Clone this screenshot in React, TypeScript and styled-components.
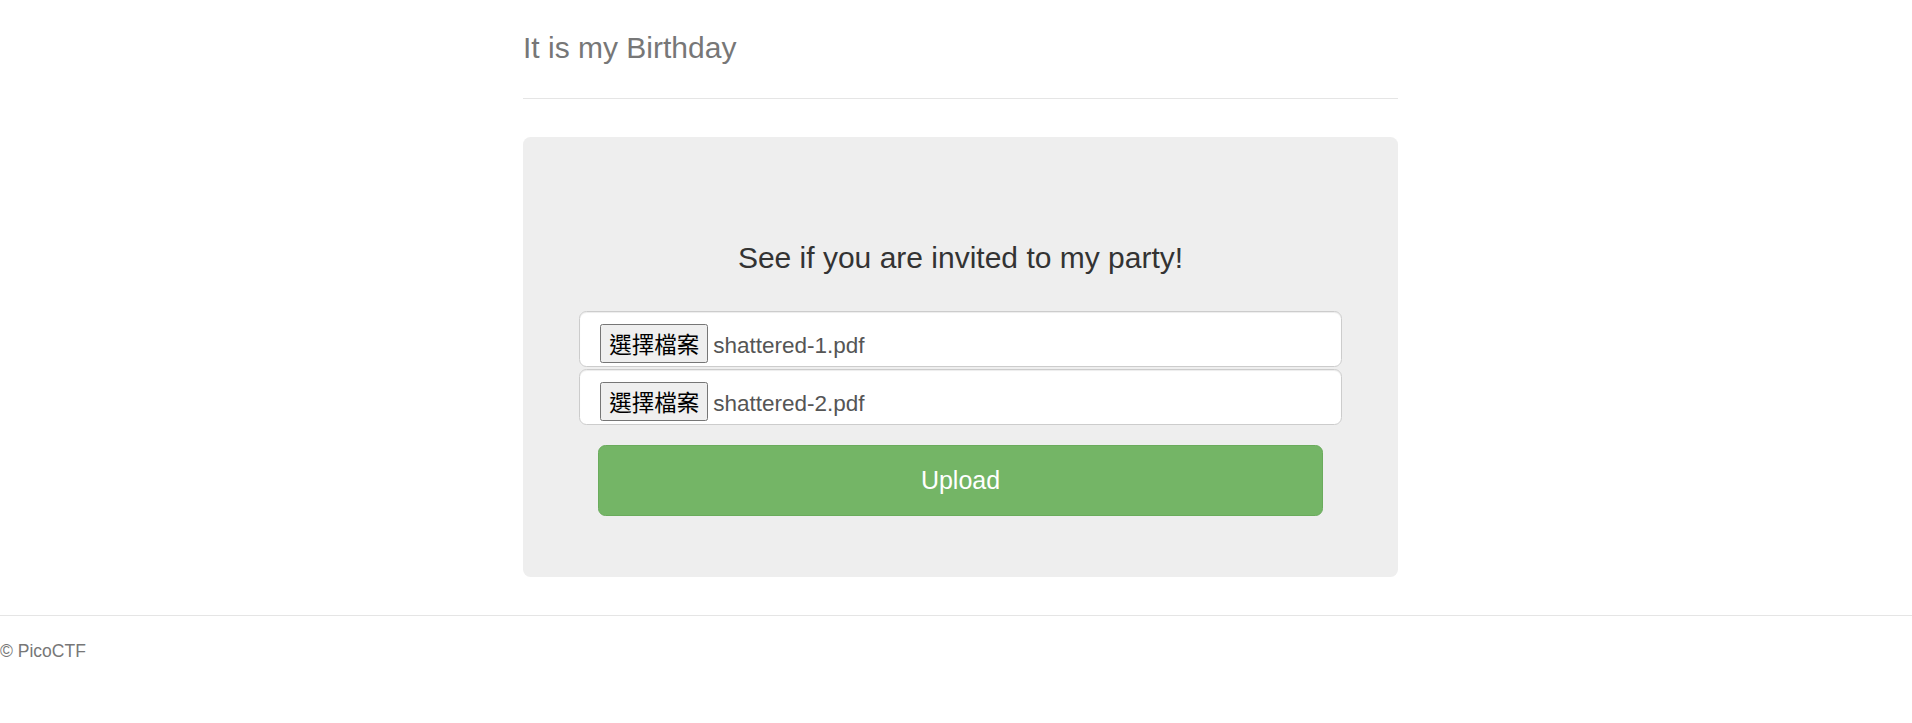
import React from "react";
import styled, { createGlobalStyle } from "styled-components";

const GlobalStyle = createGlobalStyle`
  html, body {
    margin: 0;
    padding: 0;
    background: #ffffff;
  }
  body {
    font-family: "Liberation Sans", Arial, Helvetica, sans-serif;
    color: #333333;
  }
  * {
    box-sizing: border-box;
  }
`;

const Page = styled.div`
  padding-top: 23px;
`;

const Centerer = styled.div`
  padding-left: 9px;
`;

const Container = styled.div`
  width: 875px;
  margin: 0 auto;
`;

const Header = styled.header`
  padding-bottom: 25px;
  border-bottom: 1px solid #e5e5e5;
  margin-bottom: 38px;
`;

const SiteTitle = styled.h3`
  margin: 0;
  font-size: 30px;
  line-height: 50px;
  font-weight: 500;
  color: #777777;
`;

const Jumbotron = styled.div`
  background: #eeeeee;
  border-radius: 7.5px;
  padding: 60px 75px 60.5px;
  margin-bottom: 38.5px;
  text-align: center;
`;

const Lead = styled.h3`
  margin: 44px 0 37px;
  font-size: 30px;
  line-height: 33px;
  font-weight: 500;
  color: #333333;
`;

const FileGroup = styled.div`
  display: flex;
  flex-direction: column;
  gap: 2px;
  margin: 0 -18.75px;
`;

const FileField = styled.div`
  height: 56px;
  display: flex;
  align-items: baseline;
  gap: 5px;
  padding: 12px 20px 0;
  background: #ffffff;
  border: 1px solid #cccccc;
  border-radius: 7.5px;
  box-shadow: inset 0 1px 1px rgba(0, 0, 0, 0.075);
  text-align: left;
`;

const FileButton = styled.span`
  display: inline-flex;
  align-items: center;
  justify-content: center;
  height: 39px;
  padding: 0 8px;
  background: #efefef;
  border: 1px solid #767676;
  border-radius: 2.5px;
  color: #000000;
  font-family: "Noto Sans CJK TC", "Noto Sans CJK SC", sans-serif;
  font-size: 22.5px;
  line-height: 1;
`;

const FileName = styled.span`
  font-size: 22.5px;
  color: #555555;
`;

const UploadButton = styled.button`
  display: block;
  width: 100%;
  height: 71px;
  margin-top: 20px;
  background: #74b566;
  border: 1px solid #6aab5c;
  border-radius: 7.5px;
  color: #ffffff;
  font-family: "Liberation Sans", Arial, sans-serif;
  font-size: 25px;
  cursor: pointer;
`;

const Footer = styled.footer`
  border-top: 1px solid #e5e5e5;
  padding-top: 22.5px;
`;

const FooterText = styled.p`
  margin: 0;
  font-size: 17.5px;
  line-height: 25px;
  color: #777777;
`;

const files = ["shattered-1.pdf", "shattered-2.pdf"];

export default function App() {
  return (
    <Page>
      <GlobalStyle />
      <Centerer>
        <Container>
          <Header>
            <SiteTitle>It is my Birthday</SiteTitle>
          </Header>
          <Jumbotron>
            <Lead>See if you are invited to my party!</Lead>
            <FileGroup>
              {files.map((f) => (
                <FileField key={f}>
                  <FileButton>選擇檔案</FileButton>
                  <FileName>{f}</FileName>
                </FileField>
              ))}
            </FileGroup>
            <UploadButton type="button">Upload</UploadButton>
          </Jumbotron>
        </Container>
      </Centerer>
      <Footer>
        <FooterText>© PicoCTF</FooterText>
      </Footer>
    </Page>
  );
}
